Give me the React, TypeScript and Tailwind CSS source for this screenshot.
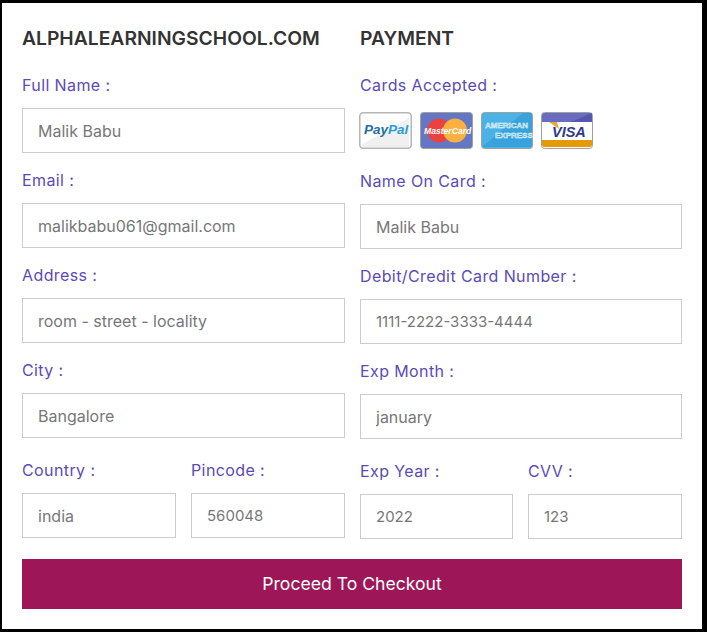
const font = { fontFamily: '"Inter", "Noto Sans", sans-serif' };

function Field({
  label,
  value,
  numeric = false,
  className = "",
}: {
  label: string;
  value: string;
  numeric?: boolean;
  className?: string;
}) {
  return (
    <div className={className}>
      <label className="block h-[25px] text-[16px] leading-[25px] tracking-[0.4px] text-[#5b4bb8] whitespace-nowrap">{label}</label>
      <input
        readOnly
        value={value}
        className={
          numeric
            ? "mt-[10px] block h-[45px] w-full border border-[#ccc] bg-white px-[15px] text-[15px] text-[#777] outline-none"
            : "mt-[10px] block h-[45px] w-full border border-[#ccc] bg-white px-[15px] text-[16px] text-[#777] outline-none"
        }
      />
    </div>
  );
}

function Cards() {
  return (
    <div className="-ml-[1px] mt-[14px] flex h-[37px] items-center gap-[8px]">
      <svg width="53" height="37" viewBox="0 0 53 37">
        <rect x="0.75" y="0.75" width="51.5" height="35.5" rx="3.5" fill="#fdfdfd" stroke="#b5b5b5" strokeWidth="1.5" />
        <path d="M2 33 L50 6 V33 a2 2 0 0 1 -2 2 H4 Z" fill="#f0f0f0" />
        <text x="5" y="22" fontSize="13.5" fontWeight="700" fontStyle="italic" fontFamily="Liberation Sans" fill="#1f6f9f">Pay<tspan fill="#2a9dd8">Pal</tspan></text>
      </svg>
      <svg width="53" height="37" viewBox="0 0 53 37">
        <rect x="0.5" y="0.5" width="52" height="36" rx="3" fill="#6477c5" stroke="#a0a0a0" />
        <circle cx="19" cy="18.5" r="12" fill="#ea4141" />
        <circle cx="35" cy="18.5" r="12" fill="#fbb03f" />
        <text x="4" y="21.5" fontSize="8.6" fontWeight="700" fontStyle="italic" fontFamily="Liberation Sans" fill="#fff">MasterCard</text>
      </svg>
      <svg width="52" height="37" viewBox="0 0 52 37">
        <rect x="0.5" y="0.5" width="51" height="36" rx="3" fill="#4ab2e4" stroke="#a0a0a0" />
        <path d="M1 35 L42 1 H49 a2 2 0 0 1 2 2 V33 a2 2 0 0 1 -2 2 Z" fill="#37a2dc" />
        <text x="4" y="16" fontSize="8" fontWeight="700" fontFamily="Liberation Sans" fill="#7fc8ee" stroke="#fff" strokeWidth="0.4">AMERICAN</text>
        <text x="14" y="26" fontSize="8" fontWeight="700" fontFamily="Liberation Sans" fill="#7fc8ee" stroke="#fff" strokeWidth="0.4">EXPRESS</text>
      </svg>
      <svg width="52" height="37" viewBox="0 0 52 37">
        <rect x="0.5" y="0.5" width="51" height="36" rx="3" fill="#fff" stroke="#a0a0a0" />
        <path d="M1 3 a2 2 0 0 1 2 -2 H49 a2 2 0 0 1 2 2 V10 H1 Z" fill="#6a6cc0" />
        <path d="M30 10 L51 1 V10 Z" fill="#5557ae" />
        <path d="M1 28 H51 V33 a2 2 0 0 1 -2 2 H3 a2 2 0 0 1 -2 -2 Z" fill="#e59a08" />
        <path d="M8 10 H16 L18 17 Z" fill="#e8a93a" />
        <text x="11" y="24.5" fontSize="14.5" fontWeight="700" fontStyle="italic" fontFamily="Liberation Sans" fill="#2f3a8f">VISA</text>
      </svg>
    </div>
  );
}

export default function App() {
  return (
    <div style={font} className="h-[632px] w-[707px] bg-black pl-[2px] pr-[5px] pt-[3px] pb-[3px]">
      <div className="h-[626px] bg-white px-[20px] pt-[20px]">
        <div className="flex gap-[15px]">
          <div className="w-[323px]">
            <h3 className="h-[30px] text-[19.3px] font-semibold leading-[30px] text-[#333] whitespace-nowrap">ALPHALEARNINGSCHOOL.COM</h3>
            <div className="mt-[20px] flex flex-col gap-[15px]">
              <Field label="Full Name :" value="Malik Babu" />
              <Field label="Email :" value="malikbabu061@gmail.com" />
              <Field label="Address :" value="room - street - locality" />
              <Field label="City :" value="Bangalore" />
            </div>
            <div className="mt-[20px] flex gap-[15px]">
              <Field className="w-[154px]" label="Country :" value="india" />
              <Field className="w-[154px]" numeric label="Pincode :" value="560048" />
            </div>
          </div>
          <div className="w-[322px]">
            <h3 className="h-[30px] text-[19.3px] font-semibold leading-[30px] text-[#333]">PAYMENT</h3>
            <div className="mt-[20px]">
              <label className="block h-[25px] text-[16px] leading-[25px] tracking-[0.4px] text-[#5b4bb8]">Cards Accepted :</label>
              <Cards />
            </div>
            <div className="mt-[20px] flex flex-col gap-[15px]">
              <Field label="Name On Card :" value="Malik Babu" />
              <Field numeric label="Debit/Credit Card Number :" value="1111-2222-3333-4444" />
              <Field label="Exp Month :" value="january" />
            </div>
            <div className="mt-[20px] flex gap-[15px]">
              <Field className="w-[153px]" numeric label="Exp Year :" value="2022" />
              <Field className="w-[154px]" numeric label="CVV :" value="123" />
            </div>
          </div>
        </div>
        <button className="mt-[20px] block h-[50px] w-[660px] bg-[#9d1758] text-[17.6px] text-white">Proceed To Checkout</button>
      </div>
    </div>
  );
}
